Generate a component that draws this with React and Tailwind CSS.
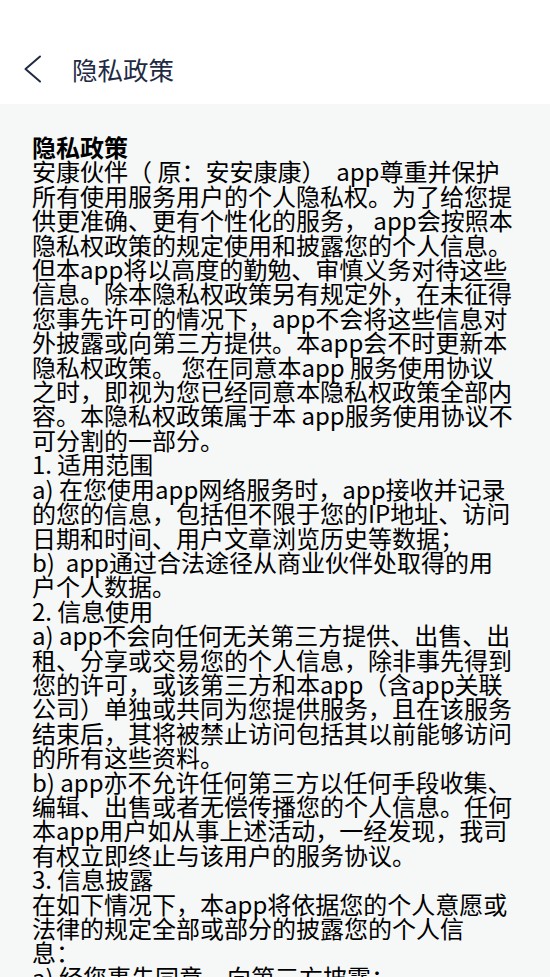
import React from 'react';

const lines = [
    '安康伙伴（ 原：安安康康）  app尊重并保护',
    '所有使用服务用户的个人隐私权。为了给您提',
    '供更准确、更有个性化的服务， app会按照本',
    '隐私权政策的规定使用和披露您的个人信息。',
    '但本app将以高度的勤勉、审慎义务对待这些',
    '信息。除本隐私权政策另有规定外，在未征得',
    '您事先许可的情况下，app不会将这些信息对',
    '外披露或向第三方提供。本app会不时更新本',
    '隐私权政策。 您在同意本app 服务使用协议',
    '之时，即视为您已经同意本隐私权政策全部内',
    '容。本隐私权政策属于本 app服务使用协议不',
    '可分割的一部分。',
    '1. 适用范围',
    'a) 在您使用app网络服务时，app接收并记录',
    '的您的信息，包括但不限于您的IP地址、访问',
    '日期和时间、用户文章浏览历史等数据；',
    'b)  app通过合法途径从商业伙伴处取得的用',
    '户个人数据。',
    '2. 信息使用',
    'a) app不会向任何无关第三方提供、出售、出',
    '租、分享或交易您的个人信息，除非事先得到',
    '您的许可，或该第三方和本app（含app关联',
    '公司）单独或共同为您提供服务，且在该服务',
    '结束后，其将被禁止访问包括其以前能够访问',
    '的所有这些资料。',
    'b) app亦不允许任何第三方以任何手段收集、',
    '编辑、出售或者无偿传播您的个人信息。任何',
    '本app用户如从事上述活动，一经发现，我司',
    '有权立即终止与该用户的服务协议。',
    '3. 信息披露',
    '在如下情况下，本app将依据您的个人意愿或',
    '法律的规定全部或部分的披露您的个人信',
    '息：',
    'a) 经您事先同意，向第三方披露；',
];

const App = () => {
    return (
        <div className="min-h-screen bg-[#f6f7f7] font-['Noto_Sans_CJK_SC','Noto_Sans',sans-serif]">
            {/* Header */}
            <div className="flex items-center h-[104px] pt-[34px] pl-[24px] bg-white">
                <svg width="18" height="28" viewBox="0 0 18 28" fill="none" className="shrink-0">
                    <polyline points="16,1.5 1.5,14 16,26.5" stroke="#1f2a44" strokeWidth="2" strokeLinecap="round" strokeLinejoin="round" />
                </svg>
                <span className="ml-[30px] text-[25.5px] leading-[30px] text-[#1f2a44]">隐私政策</span>
            </div>

            {/* Body */}
            <div className="pt-[31px] px-[32px] text-[24px] leading-[24.4px] text-black">
                <div className="font-bold">隐私政策</div>
                {lines.map((line, i) => (
                    <div key={i} className="whitespace-pre">{line}</div>
                ))}
            </div>
        </div>
    );
};

export default App;
